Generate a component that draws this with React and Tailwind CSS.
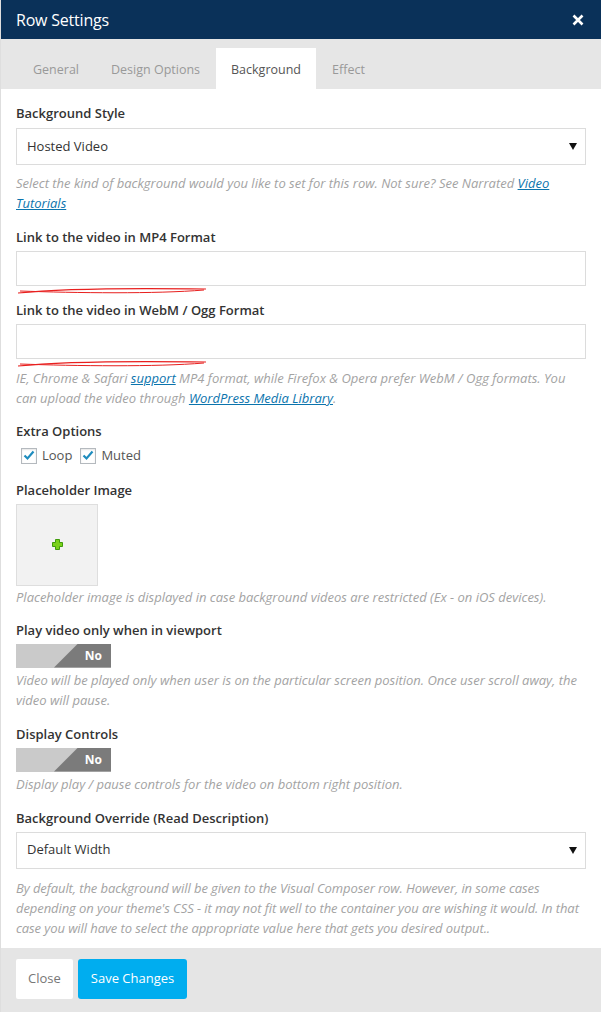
import React from 'react';

const Label = ({ children, className = '' }) => (
  <div className={`text-[13px] leading-5 font-semibold text-[#333] ${className}`}>{children}</div>
);

const Desc = ({ children, className = '' }) => (
  <p className={`text-[13px] leading-5 italic text-[#a3a3a3] ${className}`}>{children}</p>
);

const Select = ({ value }) => (
  <div className="flex items-center justify-between h-[37px] border border-[#dcdcdc] bg-white pl-[10px] pr-[8px] text-[13px] text-[#333]">
    <span>{value}</span>
    <svg width="8" height="7" viewBox="0 0 8 7"><path d="M0 0h8L4 7z" fill="#111" /></svg>
  </div>
);

const Scribble = () => (
  <svg className="absolute left-0 top-full mt-[1px]" width="194" height="8" viewBox="0 0 194 8" fill="none">
    <path d="M2 6 C 40 2, 120 1, 190 2" stroke="#e8201f" strokeWidth="1.2" />
    <path d="M4 4 C 60 6, 140 7, 188 3" stroke="#e8201f" strokeWidth="1" />
  </svg>
);

const TextInput = () => (
  <div className="relative">
    <div className="h-[35px] border border-[#dcdcdc] bg-white" />
    <Scribble />
  </div>
);

const Check = ({ label }) => (
  <label className="flex items-center gap-[5px] text-[13px] text-[#555]">
    <span className="w-4 h-4 border border-[#b4b9be] bg-white flex items-center justify-center shadow-[inset_0_1px_2px_rgba(0,0,0,0.1)]">
      <svg width="12" height="11" viewBox="0 0 12 11"><path d="M1.5 5.5 L4.5 8.5 L10.5 1.5" stroke="#1e8cbe" strokeWidth="2.2" fill="none" /></svg>
    </span>
    {label}
  </label>
);

const Toggle = () => (
  <div className="relative w-[95px] h-6 bg-[#cacaca]">
    <div className="absolute inset-0 bg-[#7b7b7b] [clip-path:polygon(62px_0,95px_0,95px_24px,38px_24px)]" />
    <span className="absolute right-[9px] top-0 leading-6 text-[12px] font-bold text-white">No</span>
  </div>
);

export default function App() {
  return (
    <div className="w-[601px] h-[1012px] flex flex-col bg-white border-l border-[#dedede] font-['Open_Sans',sans-serif]">
      <div className="h-[39px] bg-[#0a3159] flex items-center justify-between pl-[15px] pr-[17px] shrink-0">
        <span className="text-[16px] text-white tracking-[-0.2px]">Row Settings</span>
        <svg width="12" height="12" viewBox="0 0 12 12"><path d="M1.5 1.5 L10.5 10.5 M10.5 1.5 L1.5 10.5" stroke="#fff" strokeWidth="2.6" /></svg>
      </div>

      <div className="h-[50px] bg-[#e6e6e6] flex items-end pl-[16px] shrink-0 text-[12.5px]">
        <div className="h-[41px] px-[16px] pt-[3px] flex items-center text-[#999]">General</div>
        <div className="h-[41px] px-[16px] pt-[3px] flex items-center text-[#999]">Design Options</div>
        <div className="h-[41px] px-[15px] pt-[3px] flex items-center bg-white text-[#555]">Background</div>
        <div className="h-[41px] px-[16px] pt-[3px] flex items-center text-[#999]">Effect</div>
      </div>

      <div className="flex-1 px-[15px] pt-[14px]">
        <Label>Background Style</Label>
        <div className="mt-[5px]"><Select value="Hosted Video" /></div>
        <Desc className="mt-[8px]">
          Select the kind of background would you like to set for this row. Not sure? See Narrated{' '}
          <a className="text-[#0b74ad] underline">Video Tutorials</a>
        </Desc>

        <Label className="mt-[14px]">Link to the video in MP4 Format</Label>
        <div className="mt-[4px]"><TextInput /></div>

        <Label className="mt-[14px]">Link to the video in WebM / Ogg Format</Label>
        <div className="mt-[4px]"><TextInput /></div>
        <Desc className="mt-[9px]">
          IE, Chrome &amp; Safari <a className="text-[#0b74ad] underline">support</a> MP4 format, while Firefox &amp; Opera prefer WebM / Ogg formats. You can upload the video through{' '}
          <a className="text-[#0b74ad] underline">WordPress Media Library</a>.
        </Desc>

        <Label className="mt-[13px]">Extra Options</Label>
        <div className="mt-[5px] flex items-center gap-[8px] pl-[5px]">
          <Check label="Loop" />
          <Check label="Muted" />
        </div>

        <Label className="mt-[14px]">Placeholder Image</Label>
        <div className="mt-[4px] w-[82px] h-[82px] bg-[#f2f2f2] border border-[#dedede] flex items-center justify-center">
          <svg width="11" height="11" viewBox="0 0 11 11">
            <path d="M3.5 0.5h4v3h3v4h-3v3h-4v-3h-3v-4h3z" fill="#7ad11a" stroke="#3f9b0b" strokeWidth="1" />
          </svg>
        </div>
        <Desc className="mt-[1px]">Placeholder image is displayed in case background videos are restricted (Ex - on iOS devices).</Desc>

        <Label className="mt-[13px]">Play video only when in viewport</Label>
        <div className="mt-[4px]"><Toggle /></div>
        <Desc className="mt-[2px]">Video will be played only when user is on the particular screen position. Once user scroll away, the video will pause.</Desc>

        <Label className="mt-[14px]">Display Controls</Label>
        <div className="mt-[4px]"><Toggle /></div>
        <Desc className="mt-[2px]">Display play / pause controls for the video on bottom right position.</Desc>

        <Label className="mt-[14px]">Background Override (Read Description)</Label>
        <div className="mt-[4px]"><Select value="Default Width" /></div>
        <Desc className="mt-[9px] tracking-[-0.08px]">
          By default, the background will be given to the Visual Composer row. However, in some cases depending on your theme's CSS - it may not fit well to the container you are wishing it would. In that case you will have to select the appropriate value here that gets you desired output..
        </Desc>
      </div>

      <div className="h-[64px] bg-[#e5e5e5] flex items-start gap-[5px] pl-[15px] pt-[11px] shrink-0">
        <button className="h-[40px] px-[12px] bg-white rounded-[2px] text-[13px] text-[#777]">Close</button>
        <button className="h-[40px] px-[13px] bg-[#00adef] rounded-[3px] text-[13px] text-white">Save Changes</button>
      </div>
    </div>
  );
}
